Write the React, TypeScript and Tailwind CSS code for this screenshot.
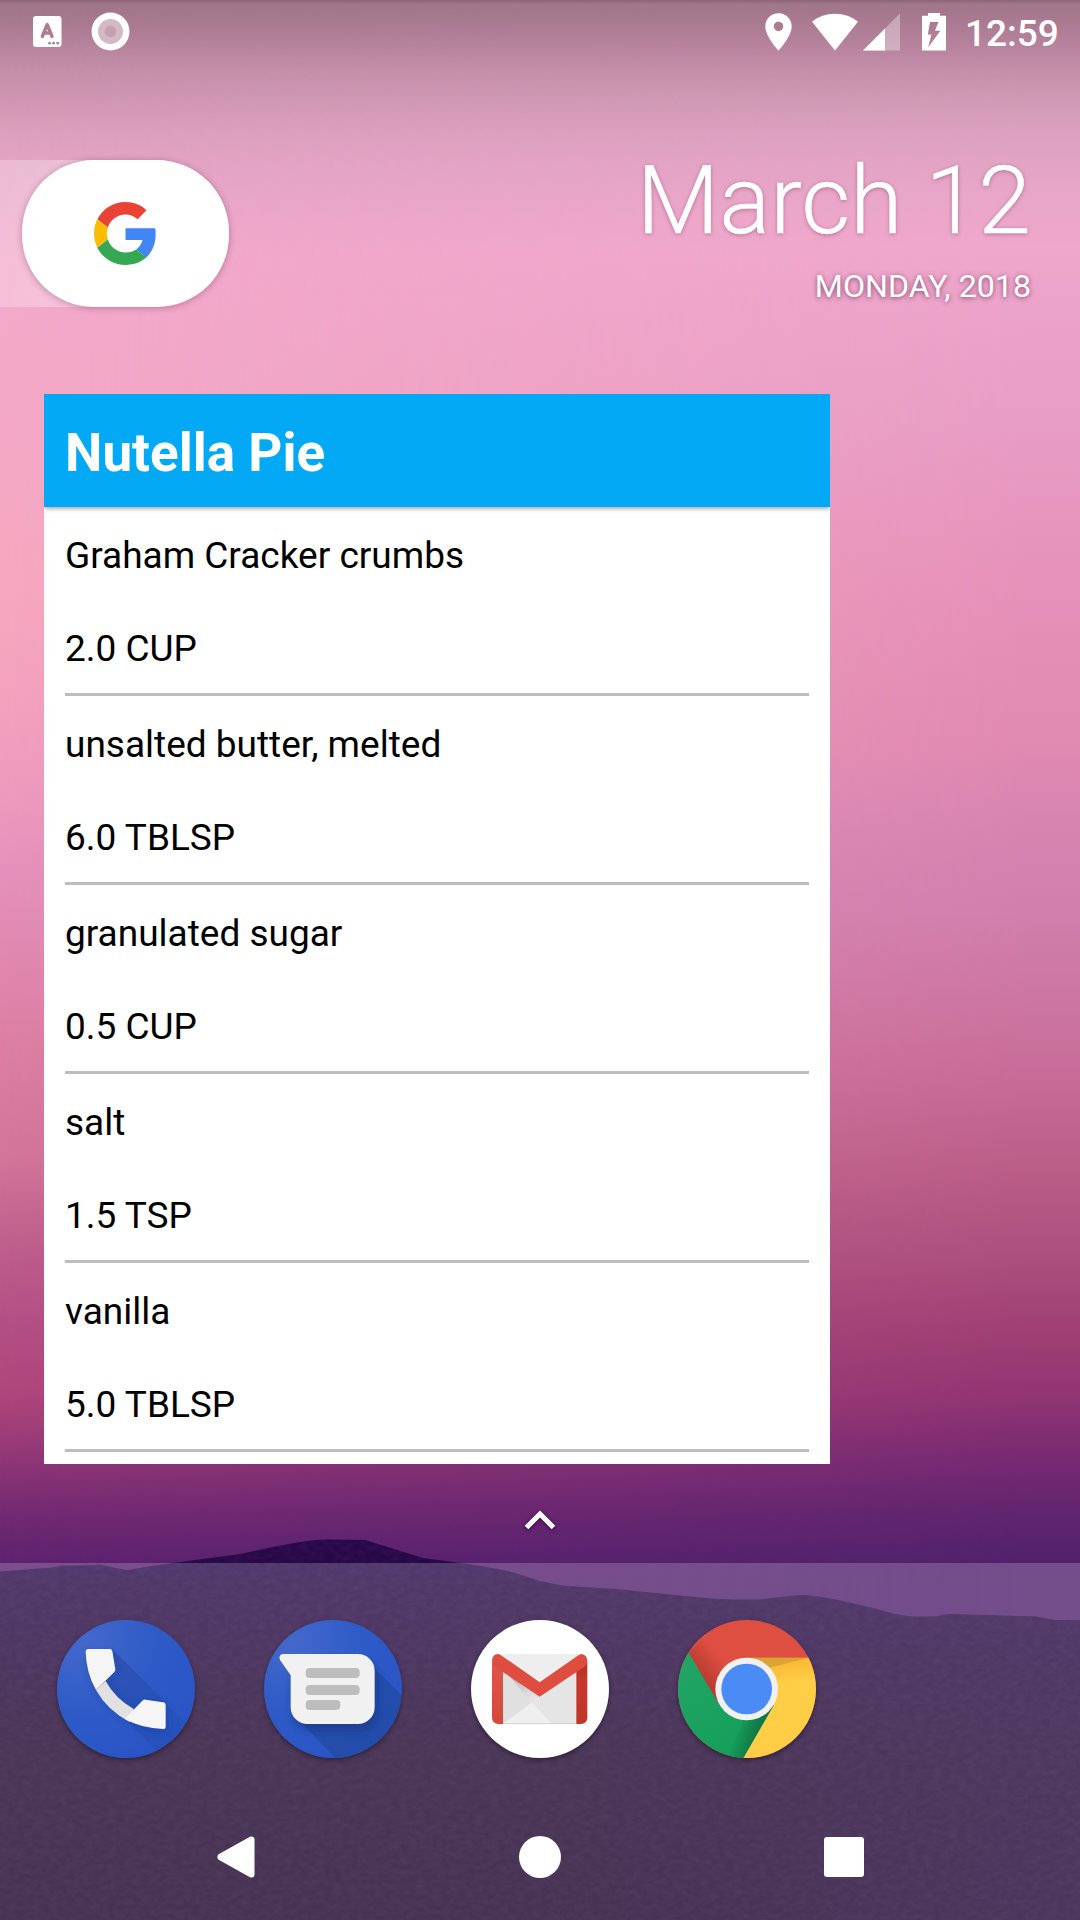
import React from "react";

const ingredients = [
  { name: "Graham Cracker crumbs", amount: "2.0 CUP" },
  { name: "unsalted butter, melted", amount: "6.0 TBLSP" },
  { name: "granulated sugar", amount: "0.5 CUP" },
  { name: "salt", amount: "1.5 TSP" },
  { name: "vanilla", amount: "5.0 TBLSP" },
];

type Stop = [number, string];

const leftSky: Stop[] = [
  [0, "#8c6476"], [4, "#a07688"], [24, "#a97a90"], [50, "#b9869f"], [72, "#c58faa"], [100, "#d096b3"], [130, "#dc9fbd"],
  [160, "#e3a3c3"], [200, "#e9a6c8"], [260, "#f3a8ca"], [308, "#f4a9ca"], [430, "#f4a9c6"], [586, "#f7a8c0"],
  [708, "#f3a1be"], [790, "#ee9abe"], [871, "#e591bb"], [977, "#e086ad"], [1035, "#dd80a4"], [1157, "#d3759a"],
  [1239, "#c0608d"], [1320, "#b45086"], [1394, "#b0467c"], [1443, "#983b78"], [1508, "#762b73"], [1563, "#5e2270"], [1640, "#4f1f6e"],
];

const rightSky: Stop[] = [
  [0, "#8c6476"], [4, "#a07688"], [24, "#ab7b92"], [50, "#b9849f"], [72, "#c58faa"], [100, "#d09ab5"], [130, "#dba0bf"],
  [160, "#e2a3c4"], [200, "#e9a6c8"], [250, "#efa7cc"], [300, "#eca3c9"], [422, "#e89dc4"], [528, "#e795bd"],
  [626, "#e58fb7"], [749, "#e089b1"], [835, "#d584b0"], [912, "#d17fad"], [1022, "#cb739e"], [1088, "#c66a96"],
  [1170, "#ba5d87"], [1252, "#ad507e"], [1332, "#9f3f74"], [1396, "#913573"], [1451, "#7a2b72"], [1514, "#60256f"],
  [1566, "#50226d"], [1640, "#502270"],
];

function SkyStops({ stops }: { stops: Stop[] }) {
  return (
    <>
      {stops.map(([y, c]) => (
        <stop key={y} offset={y / 1640} stopColor={c} />
      ))}
    </>
  );
}

function Wallpaper() {
  return (
    <svg className="absolute inset-0" width="1080" height="1920" viewBox="0 0 1080 1920" aria-hidden="true">
      <defs>
        <linearGradient id="skyL" gradientUnits="userSpaceOnUse" x1="0" y1="0" x2="0" y2="1640">
          <SkyStops stops={leftSky} />
        </linearGradient>
        <linearGradient id="skyR" gradientUnits="userSpaceOnUse" x1="0" y1="0" x2="0" y2="1640">
          <SkyStops stops={rightSky} />
        </linearGradient>
        <linearGradient id="fade">
          <stop offset="0" stopColor="#000" />
          <stop offset="0.95" stopColor="#fff" />
        </linearGradient>
        <mask id="fadeMask" maskUnits="userSpaceOnUse" x="0" y="0" width="1080" height="1920">
          <rect width="1080" height="1920" fill="url(#fade)" />
        </mask>
        <linearGradient id="hill" gradientUnits="userSpaceOnUse" x1="0" y1="1540" x2="0" y2="1920">
          <stop offset="0" stopColor="#27084a" />
          <stop offset="0.2" stopColor="#23063f" />
          <stop offset="0.55" stopColor="#1d042d" />
          <stop offset="1" stopColor="#180028" />
        </linearGradient>
        <linearGradient id="hillSide">
          <stop offset="0.5" stopColor="#2a0c4c" stopOpacity="0" />
          <stop offset="1" stopColor="#2a0c4c" stopOpacity="0.35" />
        </linearGradient>
        <filter id="grain" x="0" y="0" width="1" height="1">
          <feTurbulence type="fractalNoise" baseFrequency="0.12 0.2" numOctaves="2" seed="4" />
          <feColorMatrix values="0 0 0 0 0.5  0 0 0 0 0.22  0 0 0 0 0.55  1 0 0 0 -0.3" />
          <feComposite operator="in" in2="SourceGraphic" />
        </filter>
      </defs>
      <rect width="1080" height="1640" fill="url(#skyL)" />
      <rect width="1080" height="1640" fill="url(#skyR)" mask="url(#fadeMask)" />
      <g id="hills">
        <path d={HILL} fill="url(#hill)" />
        <path d={HILL} fill="url(#hillSide)" />
        <path d={HILL} fill="#fff" filter="url(#grain)" opacity="0.12" />
      </g>
      <rect y="1563" width="1080" height="357" fill="#fff" fillOpacity="0.2" />
    </svg>
  );
}

const HILL =
  "M0 1571.5L52 1567.5L62 1565.5Q85 1566 100 1564.5Q116 1568 127 1570Q145 1567 165 1564L241 1554Q275 1546 303 1541.5Q318 1539 331 1539.5L365 1540L386 1546.5L423 1558L461 1563Q490 1567 510 1571.5Q528 1577 540 1581Q552 1584 567 1586L616 1589L685 1596Q712 1599 733 1599.5H760Q785 1596 805 1595Q826 1597 843 1601L877 1609Q895 1615 912 1616.5H936Q944 1614 950 1614L1036 1616.5Q1048 1619 1056 1620H1080V1920H0Z";

function StatusBar() {
  return (
    <header className="flex h-[63px] w-full items-center justify-between pl-[33px] pr-[22px]">
      <div className="flex items-center">
        <svg width="29" height="31" viewBox="0 0 29 31">
          <rect width="28.500" height="31" rx="3" fill="#fff" />
          <path d="M9.300 20.500L14.200 8.500L19 20.500M11 17H17.500" fill="none" stroke="#ae7d95" strokeWidth="3.400" strokeLinecap="round" strokeLinejoin="round" />
          <circle cx="16.600" cy="27.200" r="1.400" fill="#ae7d95" />
          <circle cx="20.600" cy="27.200" r="1.400" fill="#ae7d95" />
          <circle cx="24.700" cy="27.200" r="1.400" fill="#ae7d95" />
        </svg>
        <svg className="ml-[29px]" width="39" height="39" viewBox="0 0 39 39">
          <circle cx="19.500" cy="19.500" r="19" fill="#fff" />
          <circle cx="19.500" cy="19.500" r="12.500" fill="#d3b8c6" />
          <circle cx="19.500" cy="19.500" r="5.800" fill="#c4a0b2" />
        </svg>
      </div>
      <div className="flex items-center">
        <svg width="27" height="38" viewBox="0 0 27 38" fill="#fff">
          <path fillRule="evenodd" d="M13.500 0.300C6 0.300 0.300 6.200 0.300 13.500C0.300 23.300 13.500 37.700 13.500 37.700S26.700 23.300 26.700 13.500C26.700 6.200 21 0.300 13.500 0.300ZM13.500 18.200A4.700 4.700 0 1 1 13.500 8.700A4.700 4.700 0 0 1 13.500 18.200Z" />
        </svg>
        <svg className="ml-[20px]" width="46" height="38" viewBox="0 0 46 38" fill="#fff">
          <path d="M0 8.800C6.500 3.500 14 0.700 23 0.700S39.500 3.500 46 8.800L23 37.600Z" />
        </svg>
        <svg className="ml-[5px]" width="37" height="38" viewBox="0 0 37 38" fill="#fff">
          <path d="M0 37.500L37 0.500V37.500Z" fillOpacity="0.35" />
          <path d="M0 37.500L22 15.500V37.500Z" />
        </svg>
        <svg className="ml-[22px]" width="24" height="38" viewBox="0 0 24 38" fill="#fff">
          <path fillRule="evenodd" d="M0 2.700H6V0H18V2.700H24V37.500H0ZM8 9H16.500L13 17.800H18.300L6.200 34.500L9.300 21.500H5.800Z" />
        </svg>
        <span className="ml-[19px] w-[93px] whitespace-nowrap pt-[3px] text-[37px] font-medium leading-[43px]">12:59</span>
      </div>
    </header>
  );
}

function GoogleG() {
  return (
    <svg width="63" height="63" viewBox="0 0 48 48">
      <path fill="#EA4335" d="M24 9.500c3.540 0 6.710 1.220 9.210 3.600l6.850-6.850C35.900 2.380 30.470 0 24 0 14.620 0 6.510 5.380 2.560 13.220l7.980 6.190C12.430 13.720 17.740 9.500 24 9.500z" />
      <path fill="#4285F4" d="M46.980 24.550c0-1.570-.15-3.090-.38-4.550H24v9.020h12.940c-.58 2.960-2.260 5.480-4.780 7.180l7.730 6c4.510-4.180 7.090-10.360 7.090-17.650z" />
      <path fill="#FBBC05" d="M10.530 28.590c-.48-1.450-.76-2.990-.76-4.590s.27-3.140.76-4.590l-7.980-6.190C.92 16.460 0 20.120 0 24c0 3.880.92 7.540 2.560 10.780l7.970-6.190z" />
      <path fill="#34A853" d="M24 48c6.480 0 11.930-2.130 15.890-5.810l-7.730-6c-2.150 1.450-4.920 2.300-8.160 2.300-6.260 0-11.570-4.220-13.470-9.910l-7.980 6.190C6.510 42.620 14.620 48 24 48z" />
    </svg>
  );
}

function SearchAndDate() {
  return (
    <section className="mt-[97px] flex h-[147px] w-full justify-between">
      <div className="h-[147px] w-[160px] bg-gradient-to-r from-white/25 to-white/40 pl-[22px]">
        <div className="flex h-[147px] w-[207px] items-center justify-center rounded-[72px] bg-white shadow-[0_1px_7px_rgba(60,0,40,0.3)]">
          <GoogleG />
        </div>
      </div>
      <div className="flex flex-col items-end pr-[49px]">
        <div className="-mt-[15px] whitespace-nowrap text-[95px] font-light leading-[112px] [-webkit-text-stroke:0.500px_white] [text-shadow:0_1px_4px_rgba(90,20,60,0.4)]">March 12</div>
        <div className="mt-[11px] whitespace-nowrap text-[32.200px] leading-[37px] [text-shadow:0_1px_5px_rgba(60,0,40,0.6)]">MONDAY, 2018</div>
      </div>
    </section>
  );
}

function RecipeWidget() {
  return (
    <section className="ml-[44px] mt-[87px] h-[1070px] w-[786px] overflow-hidden bg-white text-black">
      <h1 className="relative flex h-[113px] items-center bg-[#03a9f4] pl-[21px] pt-[4px] text-[53px] font-bold leading-[62px] text-white shadow-[0_1px_5px_rgba(0,0,0,0.45)]">
        Nutella Pie
      </h1>
      <ul className="px-[21px]">
        {ingredients.map((item) => (
          <li key={item.name} className="flex h-[189px] flex-col border-b-[3px] border-[#bdbdbd] pt-[27px] text-[37px] leading-[43px]">
            <span>{item.name}</span>
            <span className="mt-[50px]">{item.amount}</span>
          </li>
        ))}
      </ul>
    </section>
  );
}

function PhoneIcon() {
  return (
    <svg width="138" height="138" viewBox="0 0 414 414">
      <defs>
        <radialGradient id="blue" cx="0.2" cy="0.15" r="0.95">
          <stop offset="0" stopColor="#4469cc" />
          <stop offset="0.5" stopColor="#305cc8" />
          <stop offset="1" stopColor="#2854c6" />
        </radialGradient>
        <linearGradient id="cast" x1="0" y1="0" x2="1" y2="1">
          <stop offset="0.2" stopColor="#1f3f94" stopOpacity="0.4" />
          <stop offset="0.9" stopColor="#1f3f94" stopOpacity="0.1" />
        </linearGradient>
        <clipPath id="disc"><circle cx="207" cy="207" r="207" /></clipPath>
        <filter id="soft" x="-20%" y="-20%" width="140%" height="150%"><feGaussianBlur stdDeviation="12" /></filter>
      </defs>
      <circle cx="207" cy="207" r="207" fill="url(#blue)" />
      <g clipPath="url(#disc)">
        <path d="M166 87L420 341V414H320L117 210L175 152Z" fill="url(#cast)" />
        <path d="M90 97H166L176 152L146 188Q180 240 230 270L262 240L326 252V335C220 335 90 240 90 97Z" fill="#173a8e" fillOpacity="0.4" filter="url(#soft)" />
      </g>
      <path d="M132 196L146 183Q174 235 230 267L218 306Q150 270 117 210Z" fill="#e1e1e1" />
      <path d="M94 87H158Q165 87 166 94L175 148Q175.500 152 172 156L117 210Q88 160 86 95Q86 87 94 87Z" fill="#f5f5f5" />
      <path d="M203 297L256 242Q260 238 266 239L319 247Q326 248 326 255V320Q326 327 318 327Q255 325 203 297Z" fill="#f5f5f5" />
    </svg>
  );
}

function MessagesIcon() {
  return (
    <svg width="138" height="138" viewBox="0 0 414 414">
      <circle cx="207" cy="207" r="207" fill="url(#blue)" />
      <g clipPath="url(#disc)">
        <path d="M332 145L460 273V460H260L100 296Z" fill="#214799" fillOpacity="0.6" />
        <rect x="85" y="125" width="255" height="205" rx="50" fill="#122e74" fillOpacity="0.5" filter="url(#soft)" />
      </g>
      <path d="M56 102H282A50 50 0 0 1 332 152V262A50 50 0 0 1 282 312H130A50 50 0 0 1 80 262V166L48 120Q42 106 56 102Z" fill="#f1f1f1" />
      <g fill="#bdbdbd">
        <rect x="125" y="144" width="162" height="30" rx="12" />
        <rect x="125" y="195" width="162" height="30" rx="12" />
        <rect x="125" y="240" width="104" height="30" rx="12" />
      </g>
    </svg>
  );
}

function GmailIcon() {
  return (
    <svg width="138" height="138" viewBox="0 0 414 414">
      <defs>
        <linearGradient id="paperShade" x1="0" y1="0" x2="1" y2="1">
          <stop offset="0" stopColor="#000" stopOpacity="0.28" />
          <stop offset="0.75" stopColor="#000" stopOpacity="0" />
        </linearGradient>
        <linearGradient id="barR" x1="0" y1="0" x2="0" y2="1">
          <stop offset="0" stopColor="#a83226" />
          <stop offset="0.3" stopColor="#c5392b" />
          <stop offset="1" stopColor="#c0372a" />
        </linearGradient>
        <linearGradient id="barL" x1="0" y1="0" x2="0" y2="1">
          <stop offset="0" stopColor="#e0564a" />
          <stop offset="1" stopColor="#d2483b" />
        </linearGradient>
      </defs>
      <circle cx="207" cy="207" r="207" fill="#fff" />
      <rect x="82" y="102" width="248" height="210" fill="#eeeeee" />
      <path d="M96 155L242 312H316V145L206 222Z" fill="#e5e5e5" />
      <path d="M96 140V312L182 248Z" fill="#e0e0e0" />
      <path d="M96 312L182 248L242 312Z" fill="#efefef" />
      <path d="M96 145L182 248L240 210L206 228Z" fill="url(#paperShade)" />
      <path d="M63 125L96 150V312H83Q63 312 63 292Z" fill="url(#barL)" />
      <path d="M349 125L316 150V312H329Q349 312 349 292Z" fill="url(#barR)" />
      <path d="M63 120Q66 102 80 102Q86 103 92 107L206 187L320 107Q326 102 333 102Q348 106 349 122Q348 135 340 140L206 230L72 140Q63 134 63 120Z" fill="#de4d40" />
      <path d="M96 311H316" stroke="#c6c6c6" strokeWidth="2" />
    </svg>
  );
}

function ChromeIcon() {
  return (
    <svg width="138" height="138" viewBox="0 0 414 414">
      <defs>
        <linearGradient id="cy" gradientUnits="userSpaceOnUse" x1="300" y1="113" x2="310" y2="190">
          <stop offset="0" stopColor="#f9b52f" />
          <stop offset="1" stopColor="#ffcd46" />
        </linearGradient>
        <linearGradient id="cg" x1="0" y1="0" x2="0.5" y2="1">
          <stop offset="0" stopColor="#25a667" />
          <stop offset="1" stopColor="#159f5b" />
        </linearGradient>
        <linearGradient id="cr" gradientUnits="userSpaceOnUse" x1="60" y1="170" x2="130" y2="110">
          <stop offset="0" stopColor="#b63b2f" />
          <stop offset="1" stopColor="#b63b2f" stopOpacity="0" />
        </linearGradient>
        <linearGradient id="cgs" gradientUnits="userSpaceOnUse" x1="240" y1="330" x2="180" y2="310">
          <stop offset="0" stopColor="#0f6f41" stopOpacity="0.8" />
          <stop offset="1" stopColor="#0f6f41" stopOpacity="0" />
        </linearGradient>
      </defs>
      <g clipPath="url(#disc)">
        <rect width="414" height="414" fill="#de4f42" />
        <path d="M32 98L115 245L206 207V113L90 40Z" fill="url(#cr)" />
        <path d="M206 113H414V414H196L206 207Z" fill="url(#cy)" />
        <path d="M206 113H391L275 143Z" fill="#c99a35" fillOpacity="0.65" />
        <path d="M0 40L32 98L124 254L206 301L288 254L196 414H0Z" fill="url(#cg)" />
        <path d="M288 254L196 414H150L200 290Z" fill="url(#cgs)" />
      </g>
      <circle cx="206" cy="207" r="94" fill="#f1f1f1" />
      <circle cx="206" cy="207" r="76" fill="#4b8bf5" />
    </svg>
  );
}

function Dock() {
  const icons = [PhoneIcon, MessagesIcon, GmailIcon, ChromeIcon];
  return (
    <nav className="flex h-[138px] gap-[69px] pl-[57px]">
      {icons.map((Icon, i) => (
        <div key={i} className="h-[138px] w-[138px] rounded-full shadow-[0_2px_5px_rgba(0,0,0,0.4)]">
          <Icon />
        </div>
      ))}
    </nav>
  );
}

function NavBar() {
  return (
    <footer className="mt-[78px] flex h-[42px] items-center pl-[217px]">
      <svg width="38" height="42" viewBox="0 0 38 42" fill="#fff">
        <path d="M1.200 18.600L33 0.800Q37 -0.600 37.500 3V39Q37 42.600 33 41.200L1.200 23.400Q-0.600 21 1.200 18.600Z" />
      </svg>
      <div className="ml-[264px] h-[42px] w-[42px] rounded-full bg-white" />
      <div className="ml-[263px] h-[40px] w-[40px] rounded-[3px] bg-white" />
    </footer>
  );
}

export default function App() {
  return (
    <main className="relative h-[1920px] w-[1080px] overflow-hidden text-white [font-family:Roboto,sans-serif]">
      <Wallpaper />
      <div className="relative flex flex-col">
        <StatusBar />
        <SearchAndDate />
        <RecipeWidget />
        <div className="flex h-[156px] justify-center pt-[45px]">
          <svg className="overflow-visible drop-shadow-[0_1px_2px_rgba(40,0,50,0.8)]" width="32" height="22" viewBox="0 0 32 22">
            <path d="M2.500 18.500L16 5L29.500 18.500" fill="none" stroke="#fff" strokeWidth="5" />
          </svg>
        </div>
        <Dock />
        <NavBar />
      </div>
    </main>
  );
}
